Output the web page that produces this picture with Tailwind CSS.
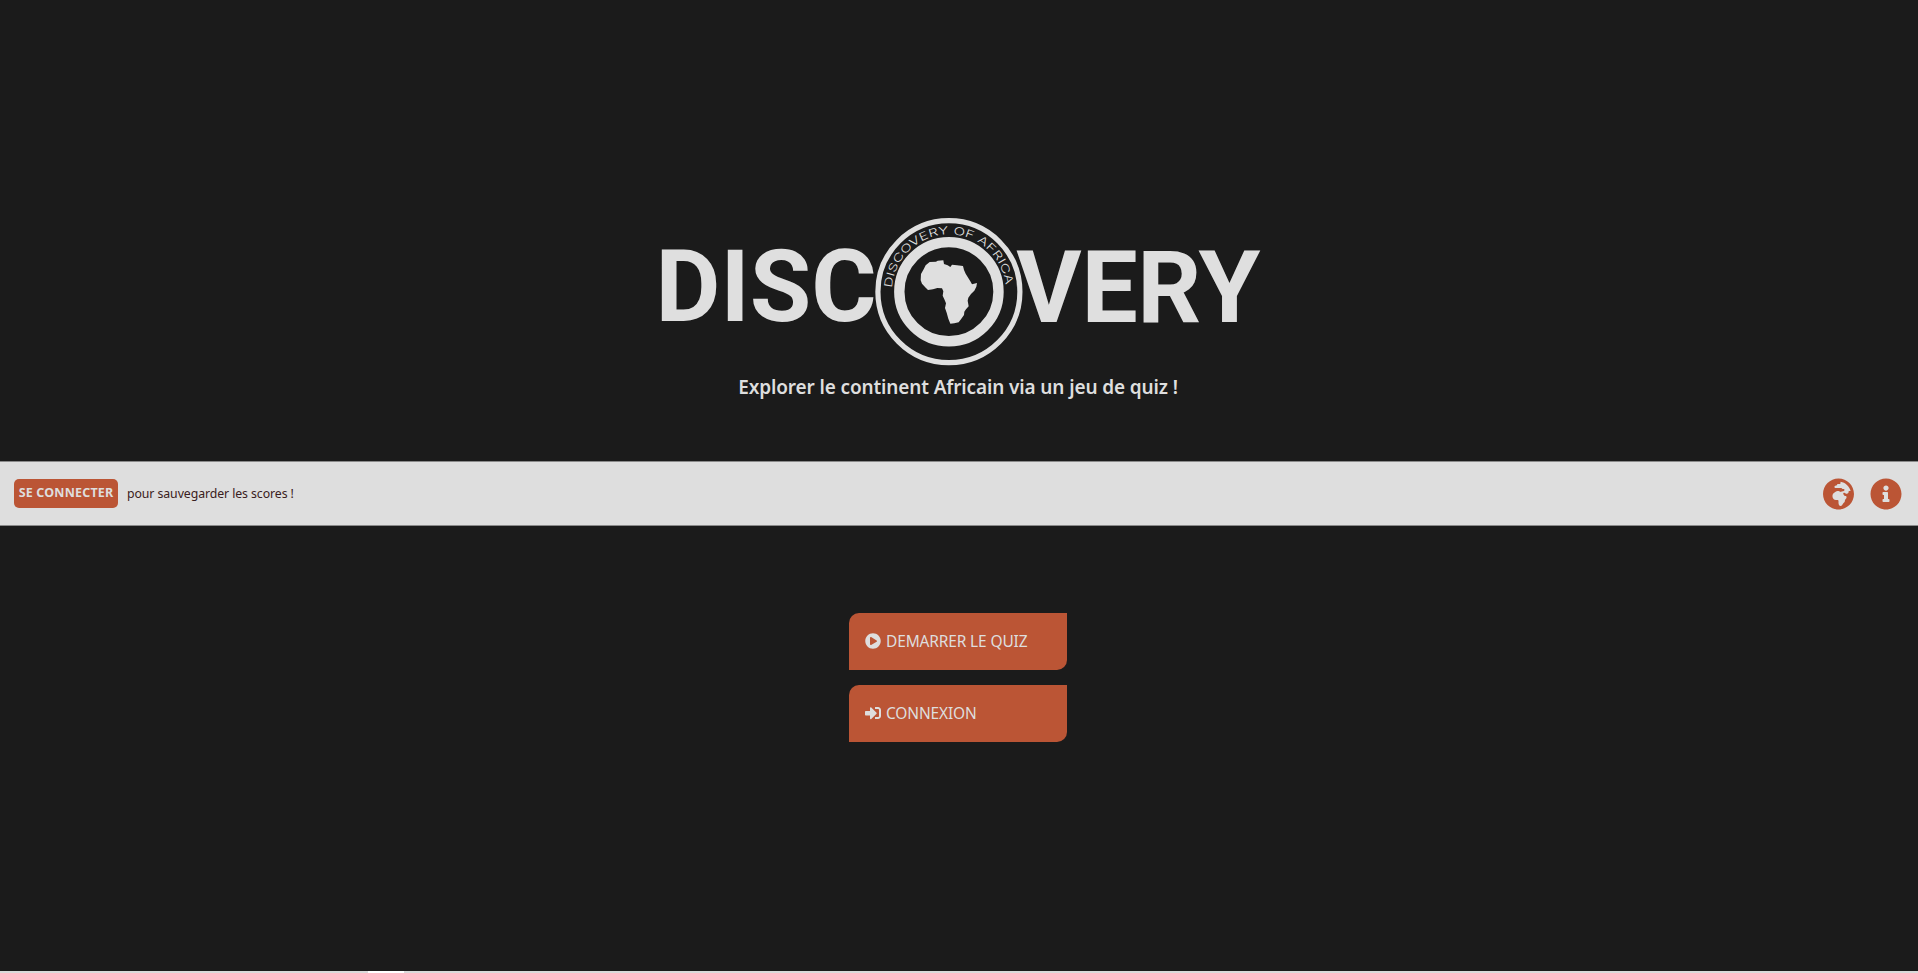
<!DOCTYPE html>
<html lang="fr">
<head>
<meta charset="utf-8">
<title>Discovery</title>
<script src="https://cdn.jsdelivr.net/npm/@tailwindcss/browser@4"></script>
</head>
<body class="flex h-[973px] flex-col overflow-hidden bg-[#1b1b1b] font-['Noto_Sans',sans-serif] text-[#dedede]">
<header class="flex h-[461px] flex-col items-center pt-[210px]">
  <svg class="ml-[2px] h-[160px] w-[620px] shrink-0" viewBox="650 210 620 160" fill="#dfdfdf">
    <text x="655.6" y="321.3" font-family="Roboto" font-weight="700" font-size="100" textLength="221" lengthAdjust="spacingAndGlyphs">DISC</text>
    <text x="1016.2 1081.4 1137.3 1198.6" y="322.3" font-family="Roboto" font-weight="700" font-size="100">VERY</text>
    <circle cx="948.9" cy="291.7" r="71" fill="#1b1b1b" stroke="#dfdfdf" stroke-width="5.2"/>
    <circle cx="948.9" cy="291.7" r="49.6" fill="none" stroke="#dfdfdf" stroke-width="10.4"/>
    <path id="arc" d="M892 288 A57 57 0 0 1 1005.8 288" fill="none"/>
    <text font-family="Inter" font-size="11" font-weight="300" textLength="169" lengthAdjust="spacingAndGlyphs"><textPath href="#arc">DISCOVERY OF AFRICA</textPath></text>
    <path transform="translate(860 210) scale(.33333)" d="M209 156 L228 155 L233 152 L250 151 L252 162 L263 166 L271 171 L276 164 L291 166 L309 168 L312 180 L317 191 L323 201 L331 214 L336 223 L351 219 L349 230 L343 242 L333 252 L325 263 L323 272 L326 289 L318 298 L313 305 L312 315 L304 326 L296 337 L283 340 L271 341 L265 326 L260 308 L255 294 L258 280 L253 268 L248 257 L250 244 L246 235 L232 234 L219 238 L204 240 L195 231 L186 221 L182 211 L183 192 L191 178 L197 166 Z"/>
  </svg>
  <h1 class="mt-[3px] mr-[2px] pt-px text-[19px] leading-[27px] font-semibold tracking-[-0.13px] whitespace-nowrap">Explorer le continent Africain via un jeu de quiz !</h1>
</header>
<nav class="flex h-[65px] shrink-0 items-center justify-between border-y border-[#8a8a8a] bg-[#dedede] pr-4 pl-3.5">
  <div class="flex items-center gap-[9px]">
    <button class="mb-px h-[29px] w-[104px] rounded-[5px] bg-[#bb5535] pt-px text-[12.5px] font-bold tracking-[0.18px] whitespace-nowrap">SE CONNECTER</button>
    <span class="pt-px text-[12.3px] tracking-[-0.08px] whitespace-nowrap text-[#3a2020]">pour sauvegarder les scores !</span>
  </div>
  <div class="flex items-center gap-4">
    <svg class="h-8 w-[31px]" viewBox="0 0 496 512" fill="#bb5535"><path d="M248 8C111.03 8 0 119.03 0 256s111.03 248 248 248 248-111.03 248-248S384.97 8 248 8zm160 215.5v6.93c0 5.87-3.32 11.24-8.57 13.86l-15.39 7.7a15.485 15.485 0 0 1-15.53-.97l-18.21-12.14a15.52 15.52 0 0 0-13.5-1.81l-2.65.88c-9.7 3.23-13.66 14.79-7.99 23.3l13.24 19.86c2.87 4.31 7.71 6.9 12.89 6.9h8.21c8.56 0 15.5 6.94 15.5 15.5v11.34c0 3.35-1.09 6.62-3.1 9.3l-18.74 24.98c-1.42 1.9-2.39 4.1-2.83 6.43l-4.3 22.83c-.62 3.29-2.29 6.29-4.76 8.56a159.608 159.608 0 0 0-25 29.16l-13.03 19.55a27.756 27.756 0 0 1-23.09 12.36c-10.51 0-20.12-5.94-24.82-15.34a78.902 78.902 0 0 1-8.33-35.29V367.5c0-8.56-6.94-15.5-15.5-15.5h-25.88c-14.49 0-28.38-5.76-38.63-16a54.659 54.659 0 0 1-16-38.63v-14.06c0-17.19 8.1-33.38 21.85-43.7l27.58-20.69a54.663 54.663 0 0 1 32.78-10.93h.89c8.48 0 16.85 1.97 24.43 5.77l14.72 7.36c3.68 1.84 7.93 2.14 11.83.84l47.31-15.77c6.33-2.11 10.6-8.03 10.6-14.7 0-8.56-6.94-15.5-15.5-15.5h-10.09c-4.11 0-8.05-1.63-10.96-4.54l-6.92-6.92a15.493 15.493 0 0 0-10.96-4.54H199.5c-8.56 0-15.5-6.94-15.5-15.5v-4.4c0-7.11 4.84-13.31 11.74-15.04l14.45-3.61c3.74-.94 7-3.23 9.14-6.44l8.08-12.11c2.87-4.31 7.71-6.9 12.89-6.9h24.21c8.56 0 15.5-6.94 15.5-15.5v-21.7C359.23 71.63 422.86 131.02 441.93 208H423.5c-8.56 0-15.5 6.94-15.5 15.5z"/></svg>
    <svg class="size-8" viewBox="0 0 512 512" fill="#bb5535"><path d="M256 8C119.043 8 8 119.083 8 256c0 136.997 111.043 248 248 248s248-111.003 248-248C504 119.083 392.957 8 256 8zm0 110c23.196 0 42 18.804 42 42s-18.804 42-42 42-42-18.804-42-42 18.804-42 42-42zm56 254c0 6.627-5.373 12-12 12h-88c-6.627 0-12-5.373-12-12v-24c0-6.627 5.373-12 12-12h12v-64h-12c-6.627 0-12-5.373-12-12v-24c0-6.627 5.373-12 12-12h64c6.627 0 12 5.373 12 12v100h12c6.627 0 12 5.373 12 12v24z"/></svg>
  </div>
</nav>
<main class="flex flex-1 flex-col items-center gap-[15.6px] pt-[87.3px] pr-[2px] text-[15.5px] tracking-[-0.15px]">
  <a class="flex h-[56.4px] w-[218px] items-center gap-[5px] rounded-tl-[10px] rounded-br-[10px] bg-[#bb5535] pl-4 whitespace-nowrap">
    <svg class="size-4 shrink-0" viewBox="0 0 512 512" fill="#dedede"><path d="M256 8C119 8 8 119 8 256s111 248 248 248 248-111 248-248S393 8 256 8zm115.700 272l-176 101c-15.800 8.800-35.700-2.500-35.700-21V152c0-18.400 19.800-29.800 35.700-21l176 107c16.400 9.200 16.400 32.900 0 42z"/></svg>
    <span class="pt-px">DEMARRER LE QUIZ</span>
  </a>
  <a class="flex h-[56.4px] w-[218px] items-center gap-[5px] rounded-tl-[10px] rounded-br-[10px] bg-[#bb5535] pl-4 whitespace-nowrap">
    <svg class="size-4 shrink-0" viewBox="0 0 512 512" fill="#dedede"><path d="M416 448h-84c-6.600 0-12-5.400-12-12v-40c0-6.600 5.400-12 12-12h84c17.700 0 32-14.300 32-32V160c0-17.700-14.300-32-32-32h-84c-6.600 0-12-5.400-12-12V76c0-6.600 5.400-12 12-12h84c53 0 96 43 96 96v192c0 53-43 96-96 96zm-47-201L201 79c-15-15-41-4.500-41 17v96H24c-13.300 0-24 10.700-24 24v96c0 13.300 10.700 24 24 24h136v96c0 21.500 26 32 41 17l168-168c9.300-9.400 9.300-24.600 0-34z"/></svg>
    <span class="pt-px">CONNEXION</span>
  </a>
</main>
<footer class="flex h-[2px] shrink-0 bg-[#dadada] pl-[368px]"><div class="h-full w-9 bg-white"></div></footer>
</body>
</html>
